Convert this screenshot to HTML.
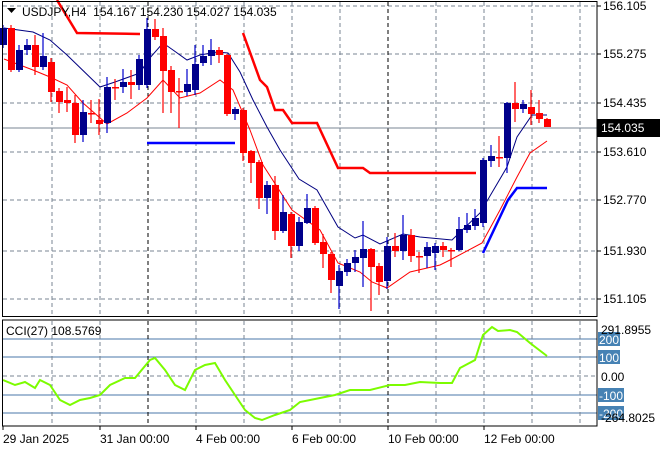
<!DOCTYPE html>
<html><head><meta charset="utf-8"><style>
html,body{margin:0;padding:0;background:#fff;}
body{width:660px;height:450px;overflow:hidden;position:relative;font-family:"Liberation Sans","DejaVu Sans",sans-serif;font-size:12px;}
svg{position:absolute;left:0;top:0;}
svg text{font-family:"Liberation Sans","DejaVu Sans",sans-serif;font-size:12px;white-space:pre;}
</style></head><body>
<svg id="s" width="660" height="450" viewBox="0 0 660 450" xmlns="http://www.w3.org/2000/svg"></svg>
<script>
const s=document.getElementById('s');let h='';
const gridY=[6,54,103,152,200,251,299];
const gridX=[52,100,148,196,244,292,340,388,436,484,532,580];
gridY.forEach(y=>h+=`<line x1="3" y1="${y}" x2="597" y2="${y}" stroke="#7a8593" stroke-dasharray="4,3"/>`);
gridX.forEach(x=>{const blk=(x==148||x==388);h+=`<line x1="${x}" y1="2" x2="${x}" y2="316" stroke="${blk?'#000':'#7a8593'}" stroke-dasharray="4,3"/>`;});
h+=`<line x1="3" y1="128" x2="597" y2="128" stroke="#7a8593"/>`;
function pl(pts,c,w){return `<polyline fill="none" stroke="${c}" stroke-width="${w}" points="${pts.map(p=>p.join(',')).join(' ')}"/>`;}
h+=pl([[57,0],[77,33],[140,34]],'#ff0000',2.5);
h+=pl([[243,33],[260,80],[267,87],[275,110],[283,110],[292,123],[317,123],[338,168],[363,168],[370,173],[476,173]],'#ff0000',2.5);
h+=pl([[147,143],[235,143]],'#0000ff',2.5);
h+=pl([[483,253],[508,200],[517,188],[547,188]],'#0000ff',2.5);
h+=pl([[4,28],[33,32],[50,40],[67,55],[100,87],[115,82],[140,73],[148,60],[163,43],[173,50],[187,60],[200,55],[217,52],[228,53],[240,72],[253,100],[267,127],[280,150],[299,179],[317,190],[338,227],[355,238],[363,235],[380,244],[403,234],[420,237],[452,240],[480,213],[507,167],[517,137],[532,115],[547,115]],'#000080',1);
h+=pl([[4,59],[33,70],[50,77],[67,85],[83,103],[107,124],[127,113],[147,98],[163,80],[180,98],[200,93],[220,80],[233,90],[250,130],[263,165],[292,210],[320,230],[338,263],[360,272],[372,282],[387,288],[410,272],[440,265],[450,260],[482,243],[500,210],[517,177],[530,153],[547,141]],'#ff0000',1);
const c=[[45,28,25,48],[28,70,25,72],[70,50,45,72],[50,45,39,55],[45,67,35,75],[67,56,33,70],[62,92,58,102],[91,102,88,113],[100,103,87,112],[103,135,95,143],[135,112,100,142],[113,113,100,123],[120,124,99,135],[123,87,77,133],[87,87,79,100],[87,82,69,93],[82,85,70,99],[85,59,55,90],[85,29,18,88],[29,37,19,40],[36,71,28,113],[70,92,66,113],[91,91,78,128],[92,84,69,96],[90,64,45,95],[63,56,45,66],[56,50,39,65],[50,55,47,63],[55,114,54,116],[114,109,107,120],[110,153,108,161],[151,163,150,183],[162,198,160,209],[198,185,181,214],[185,231,176,240],[231,212,195,233],[214,246,212,258],[246,222,217,251],[223,208,194,224],[208,243,206,245],[242,254,234,268],[254,280,252,293],[286,271,265,309],[272,263,259,276],[263,257,250,272],[258,249,221,287],[249,267,248,311],[266,282,263,295],[281,246,237,289],[246,251,233,257],[251,235,215,260],[235,256,229,262],[256,256,252,273],[256,247,242,268],[253,246,243,270],[246,250,242,257],[250,250,248,267],[250,229,217,251],[230,225,213,233],[226,218,209,230],[223,160,158,227],[161,156,145,167],[157,157,136,167],[158,103,102,173],[103,109,82,122],[109,104,100,113],[107,114,90,125],[113,119,100,123],[119,127,118,127]];
c.forEach((k,i)=>{const x=3+8*i;const up=k[1]<k[0];const col=up?'#00008b':'#ff0000';const t=Math.min(k[0],k[1]),b=Math.max(k[0],k[1]);
h+=`<line x1="${x}" y1="${k[2]}" x2="${x}" y2="${k[3]}" stroke="${up?'#0000cd':'#ff0000'}" stroke-width="1.2"/>`;
h+=`<rect x="${x-3}" y="${t}" width="7" height="${Math.max(b-t,1.5)}" fill="${col}"/>`;});
h+=`<rect x="2.5" y="1.5" width="594.5" height="315" fill="none" stroke="#000"/>`;
const pl2=[['156.105',6],['155.275',54],['154.435',103],['153.610',152],['152.770',200],['151.930',251],['151.105',299]];
pl2.forEach(([t,y])=>{h+=`<line x1="597" y1="${y}" x2="601" y2="${y}" stroke="#000"/><text x="603" y="${y+4}">${t}</text>`;});
h+=`<rect x="597" y="119" width="63" height="18" fill="#000"/><text x="601" y="132" fill="#fff">154.035</text>`;
h+=`<path d="M7 8 L16 8 L11.5 13 Z" fill="#000"/><text x="22" y="16" xml:space="preserve">USDJPY,H4  154.167 154.230 154.027 154.035</text>`;
[339,357,395,413].forEach(y=>h+=`<line x1="3" y1="${y}" x2="597" y2="${y}" stroke="#4a77a8"/>`);
h+=`<line x1="3" y1="376" x2="597" y2="376" stroke="#7a8593" stroke-dasharray="4,3"/>`;
gridX.forEach(x=>{const blk=(x==148||x==388);h+=`<line x1="${x}" y1="321" x2="${x}" y2="425" stroke="${blk?'#000':'#7a8593'}" stroke-dasharray="4,3"/>`;});
h+=pl([[3,380],[15,385],[25,382],[35,388],[40,380],[50,385],[60,400],[70,405],[80,400],[90,398],[100,395],[110,385],[125,378],[135,378],[150,360],[155,358],[165,370],[175,385],[185,390],[195,370],[205,365],[215,363],[225,380],[235,395],[245,410],[255,418],[262,420],[275,415],[290,410],[300,402],[320,398],[335,395],[350,390],[370,390],[390,385],[405,385],[420,382],[440,383],[452,383],[460,368],[475,360],[483,335],[492,327],[498,331],[510,330],[517,332],[530,343],[547,356]],'#7cfc00',2);
h+=`<rect x="2.5" y="320" width="594.5" height="106" fill="none" stroke="#000"/>`;
h+=`<text x="6" y="335">CCI(27) 108.5769</text>`;
h+=`<rect x="598" y="332" width="22" height="14" fill="#4682b4"/><text x="599" y="344" fill="#fff">200</text>`;
h+=`<rect x="598" y="350" width="22" height="14" fill="#4682b4"/><text x="599" y="362" fill="#fff">100</text>`;
h+=`<text x="601" y="381">0.00</text>`;
h+=`<rect x="598" y="388" width="26" height="14" fill="#4682b4"/><text x="599" y="400" fill="#fff">-100</text>`;
h+=`<rect x="598" y="406" width="26" height="14" fill="#4682b4"/><text x="599" y="418" fill="#fff">-200</text>`;
h+=`<text x="601" y="334">291.8955</text><text x="601" y="422">-264.8025</text>`;
[[3,'29 Jan 2025'],[100,'31 Jan 00:00'],[196,'4 Feb 00:00'],[292,'6 Feb 00:00'],[388,'10 Feb 00:00'],[484,'12 Feb 00:00']].forEach(([x,t])=>{h+=`<line x1="${x}" y1="426" x2="${x}" y2="430" stroke="#000"/><text x="${x}" y="443">${t}</text>`;});
s.innerHTML=h;
</script>
</body></html>
